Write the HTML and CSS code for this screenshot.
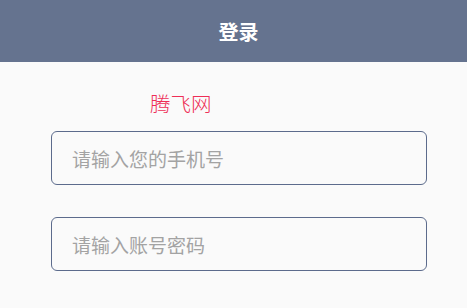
FILE: index.html
```html
<!DOCTYPE html>
<html>
<head>
<meta charset="utf-8">
<title>登录</title>
<link rel="stylesheet" href="styles.css">
</head>
<body>

<div class="topbar">
    <div class="topbar-title">登录</div>
</div>

<div class="login">
    <div class="brand">腾飞网</div>
    <input class="field" type="text" placeholder="请输入您的手机号">
    <input class="field" type="password" placeholder="请输入账号密码">
</div>

</body>
</html>
```

FILE: styles.css
```css
body {
    margin: 0;
    background: #fafafa;
    font-family: "Noto Sans CJK SC", "Noto Sans", sans-serif;
}

.topbar {
    height: 62px;
    background: #65738f;
    display: flex;
    align-items: center;
    justify-content: center;
}

.topbar-title {
    color: #fff;
    font-size: 20px;
    font-weight: bold;
    padding-left: 10px;
}

.login {
    display: flex;
    flex-direction: column;
    padding: 0 40px 0 51px;
}

.brand {
    margin: 25px 0 0 99px;
    height: 44px;
    line-height: 32px;
    font-size: 20.5px;
    font-weight: 300;
    color: #ee2f57;
}

.field {
    box-sizing: border-box;
    width: 376px;
    height: 54px;
    margin-bottom: 32px;
    padding: 0 20px;
    border: 1px solid #5c6b8c;
    border-radius: 6px;
    background: transparent;
    font-family: inherit;
    font-size: 19px;
    color: #333;
    outline: none;
}

.field::placeholder {
    color: #a3a3a3;
}
```
